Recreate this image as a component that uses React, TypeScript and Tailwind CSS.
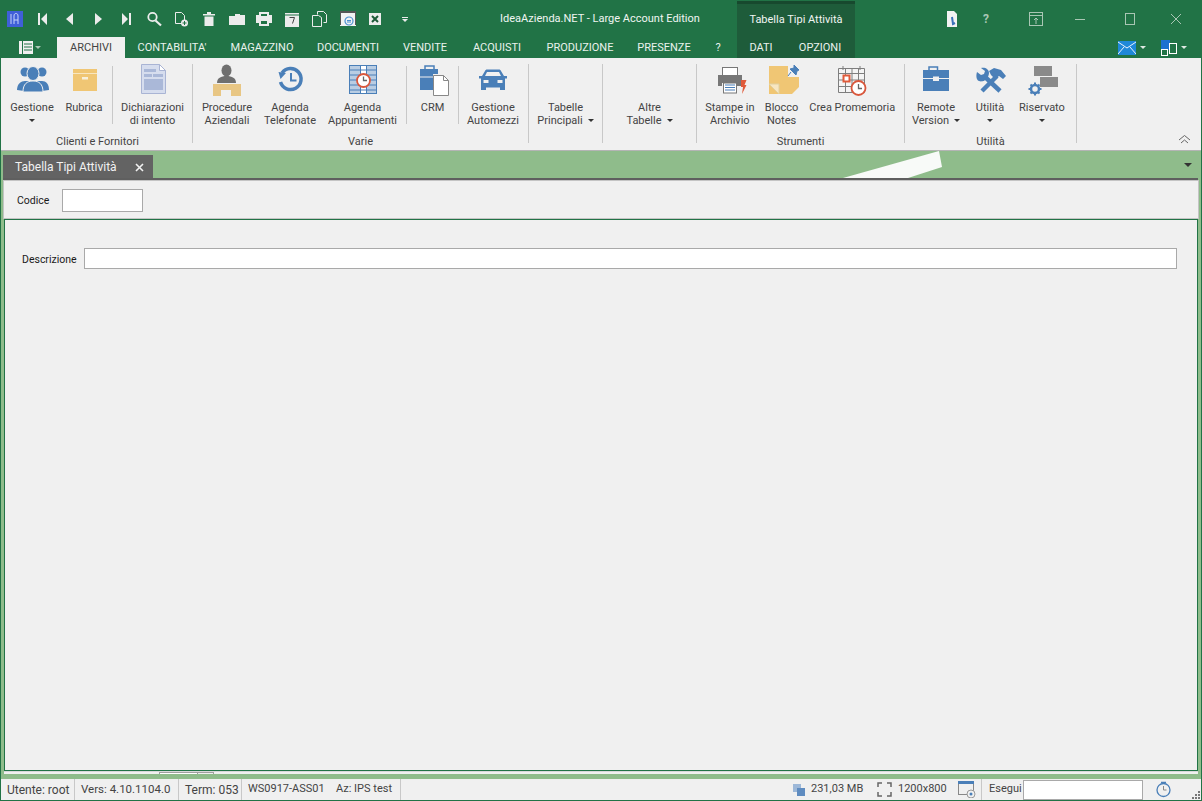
import type { ReactNode } from "react";

const blue = "#4a7fb8";
const font = { fontFamily: 'Roboto, "Noto Sans", sans-serif' };

function Caret({ className = "" }: { className?: string }) {
  return <span className={`inline-block w-0 h-0 border-x-[3px] border-t-[3px] border-x-transparent border-t-[#333] ${className}`} />;
}

function QuickBtn({ children, w = "w-[28px]" }: { children: ReactNode; w?: string }) {
  return <div className={`${w} h-[20px] flex items-center justify-center`}>{children}</div>;
}

function QuickBar() {
  const c = "#ececec";
  return (
    <div className="flex items-center w-[420px]">
      <QuickBtn>
        <svg width="16" height="16" viewBox="0 0 16 16"><rect width="16" height="16" fill="#3f5fd8" /><path d="M4 3v10M7 13V5c0-2 1-2.500 2-2.500s2 .5 2 2.500v8M7 9h4" stroke="#c8d4f8" strokeWidth="1" fill="none" /></svg>
      </QuickBtn>
      <QuickBtn><svg width="12" height="14" viewBox="0 0 12 14"><path d="M1 1h2v12H1zM4 7l6-6v12z" fill={c} /></svg></QuickBtn>
      <QuickBtn><svg width="12" height="14" viewBox="0 0 12 14"><path d="M2 7l7-6v12z" fill={c} /></svg></QuickBtn>
      <QuickBtn><svg width="12" height="14" viewBox="0 0 12 14"><path d="M10 7L3 1v12z" fill={c} /></svg></QuickBtn>
      <QuickBtn><svg width="12" height="14" viewBox="0 0 12 14"><path d="M9 1h2v12H9zM8 7L2 1v12z" fill={c} /></svg></QuickBtn>
      <QuickBtn><svg width="16" height="16" viewBox="0 0 16 16" fill="none" stroke={c}><circle cx="6.500" cy="6" r="4.200" strokeWidth="1.800" /><path d="M9.500 9.500l5.500 5" strokeWidth="2.200" /></svg></QuickBtn>
      <QuickBtn><svg width="16" height="16" viewBox="0 0 16 16" fill="none" stroke={c}><path d="M2.500 1.500h6l3 3v8h-9z" /><circle cx="11.500" cy="12" r="3.500" fill={c} stroke="none" /><path d="M9.500 12h4M11.500 10v4" stroke="#217346" /></svg></QuickBtn>
      <QuickBtn><svg width="14" height="14" viewBox="0 0 14 14" fill={c}><path d="M1 2h12v1.500H1zM5 0h4v2H5zM2.500 4.500h9V14h-9z" /></svg></QuickBtn>
      <QuickBtn><svg width="16" height="12" viewBox="0 0 16 12" fill={c}><path d="M0 3h6V1h5v1h5v10H0z" /></svg></QuickBtn>
      <QuickBtn><svg width="16" height="14" viewBox="0 0 16 14"><path d="M3 0h10v3h3v8h-3v3H3v-3H0V3h3z" fill={c} /><path d="M5 2h6v2H5zM5 9h6v3H5z" fill="#217346" /></svg></QuickBtn>
      <QuickBtn><svg width="14" height="15" viewBox="0 0 14 15"><rect y="1" width="14" height="14" fill={c} /><path d="M0 3h14" stroke="#217346" /><path d="M4.500 5.500h5l-2 6" stroke="#444" fill="none" /></svg></QuickBtn>
      <QuickBtn><svg width="15" height="16" viewBox="0 0 15 16" fill="none" stroke={c}><path d="M5.500 3.500V.5h6l3 3v8h-3" /><path d="M.5 4.500h6l3 2v9h-9z" /></svg></QuickBtn>
      <QuickBtn><svg width="16" height="16" viewBox="0 0 16 16"><rect width="16" height="15" fill="#f2f2f2" /><path d="M0 0h16v2H0zM0 2h1v12H0zM15 2h1v12h-1z" fill="#555" /><circle cx="9" cy="10" r="4" fill="none" stroke="#4a8fd0" strokeWidth="1.200" /><path d="M7 9.500h4M7 11h4" stroke="#4a8fd0" /></svg></QuickBtn>
      <QuickBtn><svg width="12" height="12" viewBox="0 0 12 12"><rect width="12" height="12" fill={c} /><path d="M3 3l6 6M9 3l-6 6" stroke="#1c5a37" strokeWidth="2" /></svg></QuickBtn>
      <QuickBtn w="w-[32px]"><div className="flex flex-col items-center gap-[1px]"><span className="w-[6px] h-px bg-[#ececec]" /><Caret className="border-t-[#ececec]" /></div></QuickBtn>
    </div>
  );
}

function TitleBar() {
  return (
    <div className="flex h-[36px] items-center">
      <QuickBar />
      <div className="w-[316px] text-center text-[11px] text-[#f0f5f2] pl-[42px] whitespace-nowrap">IdeaAzienda.NET - Large Account Edition</div>
      <div className="w-[118px] h-full bg-[#1e5c3a] border-t-[3px] border-[#17492e] flex items-center justify-center text-[11px] text-[#f0f5f2] pb-[1px]">Tabella Tipi Attività</div>
      <div className="flex-1 flex items-center pl-[90px]">
        <svg width="14" height="16" viewBox="0 0 14 16"><path d="M2 0h7l3 3v13H2z" fill="#f2f2f2" /><path d="M7 6l1 7 2-1" stroke="#3a70b8" strokeWidth="2" fill="none" /></svg>
        <span className="ml-[24px] w-[8px] text-[12px] text-[#a9c6b4] font-bold">?</span>
        <svg className="ml-[38px]" width="14" height="14" viewBox="0 0 14 14" fill="none" stroke="#a9c6b4"><rect x="0.500" y="0.500" width="13" height="13" /><path d="M1 3.500h12M7 12V6M5 8l2-2 2 2" /></svg>
        <svg className="ml-[31px]" width="12" height="12" viewBox="0 0 12 12" stroke="#a9c6b4"><path d="M1 6.500h10" /></svg>
        <svg className="ml-[38px]" width="12" height="12" viewBox="0 0 12 12" fill="none" stroke="#a9c6b4"><rect x="1.500" y="0.500" width="9" height="11" /></svg>
        <svg className="ml-[34px]" width="12" height="12" viewBox="0 0 12 12" stroke="#a9c6b4"><path d="M1 1l10 10M11 1L1 11" /></svg>
      </div>
    </div>
  );
}

function MenuTab({ w, label, active }: { w: string; label: string; active?: boolean }) {
  return <div className={`${w} h-full flex items-center justify-center pt-[1px] text-[11px] ${active ? "bg-[#f0f0f0] text-[#444]" : "text-[#eaf2ed]"}`}>{label}</div>;
}

function MenuRow() {
  return (
    <div className="flex h-[21px]">
      <div className="w-[56px] flex items-center pl-[18px] gap-[2px]">
        <svg width="14" height="13" viewBox="0 0 14 13" fill="#f0f0f0"><rect x="0" y="0" width="3" height="13" /><rect x="4" y="0" width="10" height="13" /><path d="M5 3h8M5 6h8M5 9h8" stroke="#217346" /></svg>
        <Caret className="border-t-[#a9c6b4]" />
      </div>
      <MenuTab w="w-[68px]" label="ARCHIVI" active />
      <MenuTab w="w-[94px]" label="CONTABILITA'" />
      <MenuTab w="w-[86px]" label="MAGAZZINO" />
      <MenuTab w="w-[86px]" label="DOCUMENTI" />
      <MenuTab w="w-[68px]" label="VENDITE" />
      <MenuTab w="w-[76px]" label="ACQUISTI" />
      <MenuTab w="w-[90px]" label="PRODUZIONE" />
      <MenuTab w="w-[78px]" label="PRESENZE" />
      <MenuTab w="w-[30px]" label="?" />
      <div className="w-[4px]" />
      <div className="w-[118px] flex bg-[#1e5c3a]">
        <MenuTab w="w-[48px]" label="DATI" />
        <MenuTab w="w-[70px]" label="OPZIONI" />
      </div>
      <div className="flex-1 flex items-center pl-[263px]">
        <svg width="18" height="14" viewBox="0 0 18 14"><rect width="18" height="14" fill="#1e88d8" /><path d="M0 1l9 6 9-6M0 13l6-7M18 13l-6-7" stroke="#eaf4fc" fill="none" /></svg>
        <Caret className="ml-[4px] border-t-[#dfe9e3]" />
        <svg className="ml-[15px]" width="16" height="16" viewBox="0 0 16 16"><rect x="0" y="0" width="9" height="10" fill="#1e70d0" /><rect x="0.500" y="9.500" width="6" height="6" fill="none" stroke="#fff" /><rect x="8.500" y="3.500" width="7" height="10" fill="#217346" stroke="#fff" /></svg>
        <Caret className="ml-[4px] border-t-[#dfe9e3]" />
      </div>
    </div>
  );
}

function RibbonItem({ w, icon, lines, caret }: { w: string; icon?: ReactNode; lines: string[]; caret?: "below" | "inline" }) {
  return (
    <div className={`${w} flex flex-col items-center text-[11px] leading-[13px] text-[#444]`}>
      <div className="h-[37px] w-[36px]">{icon}</div>
      {lines.map((l, i) => (
        <div key={l} className="whitespace-nowrap h-[13px]">
          {l}
          {caret === "inline" && i === lines.length - 1 && <Caret className="ml-[5px] mb-[2px]" />}
        </div>
      ))}
      {caret === "below" && <div className="h-[13px] flex items-center"><Caret /></div>}
    </div>
  );
}

function Group({ w, label, children }: { w: string; label?: string; children: ReactNode }) {
  return (
    <div className={`${w} h-[79px] border-r border-[#c8c8c8] flex flex-col shrink-0`}>
      <div className="h-[71px] flex shrink-0">{children}</div>
      <div className="h-[14px] shrink-0 text-center text-[11px] leading-[14px] text-[#444]">{label}</div>
    </div>
  );
}

function ShortSep() {
  return <div className="w-px h-[58px] mt-[2px] bg-[#c8c8c8] shrink-0" />;
}

function RibbonLines({ first, second }: { first: string; second: string }) {
  return (
    <div className="flex flex-col items-center text-[11px] leading-[13px] text-[#444]">
      <div className="h-[13px]">{first}</div>
      <div className="h-[13px]">{second}<Caret className="ml-[5px] mb-[2px]" /></div>
    </div>
  );
}

function Ribbon() {
  return (
    <div className="h-[93px] bg-[#f0f0f0] border-b border-[#b4b4b4] flex pt-[6px] pl-[2px]">
      <Group w="w-[190px]" label="Clienti e Fornitori">
        <RibbonItem w="w-[58px]" caret="below" lines={["Gestione"]} icon={
          <svg width="36" height="36" viewBox="14 64 36 36" fill={blue}>
            <circle cx="25" cy="72" r="4.500" /><circle cx="42" cy="72" r="4.500" />
            <path d="M17 90c0-6 4-9 8-9h17c4 0 7 3 7 9l-7 1H24z" />
            <ellipse cx="33" cy="73.500" rx="6" ry="7" stroke="#f0f0f0" />
            <path d="M23 92c0-8 4-11 10-11s10 3 10 11z" stroke="#f0f0f0" />
          </svg>} />
        <RibbonItem w="w-[46px]" lines={["Rubrica"]} icon={
          <svg width="36" height="36" viewBox="66 64 36 36">
            <path d="M73 69h24v22H73z" fill="#f0c674" /><path d="M73 73.500h24" stroke="#f8e6c0" /><rect x="82" y="77" width="6" height="2.500" fill="#f8f0dc" />
          </svg>} />
        <div className="w-[5px]" />
        <ShortSep />
        <RibbonItem w="w-[79px]" lines={["Dichiarazioni", "di intento"]} icon={
          <svg width="36" height="36" viewBox="134 64 36 36">
            <path d="M140.500 64.500h18l6 6v23h-24z" fill="#d6ddee" stroke="#a9b4d4" />
            <path d="M158.500 64.500v6h6z" fill="#fff" stroke="#a9b4d4" />
            <path d="M143 69h12v3h-12zM143 74h8v3h-8zM152 74h10v3h-10zM143 79h19v11h-19z" fill="#aab8d8" />
          </svg>} />
      </Group>
      <Group w="w-[336px]" label="Varie">
        <RibbonItem w="w-[68px]" lines={["Procedure", "Aziendali"]} icon={
          <svg width="36" height="36" viewBox="209 64 36 36">
            <ellipse cx="226.500" cy="70.500" rx="5" ry="6" fill="#6f6f6f" /><path d="M217 83c0-5 4-7 9.500-7s9.500 2 9.500 7z" fill="#6f6f6f" />
            <path d="M213 84h28v12h-10v-6h-10v6h-8z" fill="#e8c684" />
          </svg>} />
        <RibbonItem w="w-[58px]" lines={["Agenda", "Telefonate"]} icon={
          <svg width="36" height="36" viewBox="272 64 36 36" fill="none" stroke={blue}>
            <path d="M282 73a10.500 10.500 0 1 1-1.500 9" strokeWidth="3.500" />
            <path d="M278.500 72l7.500 1-5.500 6z" fill={blue} stroke="none" />
            <path d="M291 73v7.500h5.500" strokeWidth="2" />
          </svg>} />
        <RibbonItem w="w-[87px]" lines={["Agenda", "Appuntamenti"]} icon={
          <svg width="36" height="36" viewBox="345 64 36 36">
            <rect x="349.500" y="65.500" width="27" height="28" fill="#fff" stroke={blue} />
            <path d="M350 66h10v27h-10zM367 66h9v27h-9z" fill="#b9cde3" />
            <path d="M350 70h26M350 75h26M350 80h26M350 85h26M350 90h26M360.500 66v27M366.500 66v27" stroke={blue} />
            <circle cx="363.500" cy="80.500" r="6.500" fill="#fff" stroke="#d9573c" strokeWidth="1.800" />
            <path d="M363.500 76.500v4h3.500" stroke="#666" strokeWidth="1.300" fill="none" />
          </svg>} />
        <ShortSep />
        <RibbonItem w="w-[51px]" lines={["CRM"]} icon={
          <svg width="36" height="36" viewBox="414 64 36 36">
            <path d="M424 69v-3h9v3" stroke={blue} strokeWidth="1.500" fill="none" />
            <path d="M419 69h18v5h-5v16h-13z" fill={blue} /><path d="M419 77h13" stroke="#f0f0f0" />
            <path d="M432.500 75.500h10l5 5v15h-15z" fill="#fff" stroke="#888" />
            <path d="M442.500 75.500v5h5" fill="none" stroke="#888" />
          </svg>} />
        <ShortSep />
        <RibbonItem w="w-[68px]" lines={["Gestione", "Automezzi"]} icon={
          <svg width="36" height="36" viewBox="475 64 36 36">
            <path d="M482 76l3-5c.5-1 1-1.500 2-1.500h12c1 0 1.500.5 2 1.500l3 5h3v2.500h-2V90h-5v-2.500h-14V90h-5V78.500h-2V76z" fill={blue} />
            <path d="M485 76l2-4h12l2 4z" fill="#f0f0f0" /><rect x="483.500" y="80" width="5" height="3" fill="#f0f0f0" /><rect x="497.500" y="80" width="5" height="3" fill="#f0f0f0" />
          </svg>} />
      </Group>
      <Group w="w-[74px]">
        <div className="w-full pt-[37px]">
          <RibbonLines first="Tabelle" second="Principali" />
        </div>
      </Group>
      <Group w="w-[94px]">
        <div className="w-full pt-[37px]">
          <RibbonLines first="Altre" second="Tabelle" />
        </div>
      </Group>
      <Group w="w-[208px]" label="Strumenti">
        <RibbonItem w="w-[66px]" lines={["Stampe in", "Archivio"]} icon={
          <svg width="36" height="36" viewBox="712 64 36 36">
            <rect x="722.500" y="67.500" width="15" height="8" fill="#fff" stroke="#777" />
            <path d="M718 75h24v11h-5v-3h-15v3h-4z" fill="#777" />
            <rect x="723.500" y="83" width="13" height="10" fill="#fff" stroke="#777" /><path d="M725 85h10M725 87.500h10M725 90h10" stroke={blue} strokeWidth="1.200" />
            <path d="M741 80h5.500l-2 5h2l-4.500 9 1-7h-2z" fill="#e05a3a" />
          </svg>} />
        <RibbonItem w="w-[38px]" lines={["Blocco", "Notes"]} icon={
          <svg width="36" height="36" viewBox="764 64 36 36">
            <path d="M769 66h19l11 1v20l-7 7h-23z" fill="#f0c674" /><path d="M769 84l10 10v-10z" fill="#f8e6c0" stroke="#e0d0a0" />
            <path d="M788 66h11v11h-11z" fill="#f0f0f0" />
            <path d="M794 65l5 5-2 1-1 4-6-6 4-1zM791 72l-3 4" fill={blue} stroke={blue} />
          </svg>} />
        <RibbonItem w="w-[104px]" lines={["Crea Promemoria"]} icon={
          <svg width="36" height="36" viewBox="836 64 36 36">
            <path d="M840.500 68.500h26v24h-26zM840 73.500h27M847.500 69v24M854 69v24M860.500 69v24M840 80h27M840 86.500h27M845 66v4M862 66v4" fill="#f4f4f4" stroke="#7e7e7e" />
            <rect x="845.500" y="75.500" width="6" height="6" fill="#fff" stroke="#e05a3a" strokeWidth="2" />
            <circle cx="860.500" cy="88" r="7" fill="#fff" stroke="#d9573c" strokeWidth="1.800" />
            <path d="M860.500 84v4.500h3.500" stroke="#666" strokeWidth="1.300" fill="none" />
          </svg>} />
      </Group>
      <Group w="w-[172px]" label="Utilità">
        <RibbonItem w="w-[62px]" caret="inline" lines={["Remote", "Version"]} icon={
          <svg width="36" height="36" viewBox="920 64 36 36">
            <path d="M931 70v-3h8.500v3" fill="none" stroke={blue} strokeWidth="1.500" />
            <path d="M925 70h26v8h-10v-1.500h-6V78h-10zM925 79h10v2h6v-2h10v12h-26z" fill={blue} />
          </svg>} />
        <RibbonItem w="w-[46px]" caret="below" lines={["Utilità"]} icon={
          <svg width="36" height="36" viewBox="972 64 36 36" fill={blue}>
            <path d="M984 76l16 15" stroke={blue} strokeWidth="4.500" />
            <path d="M997 76L982 91" stroke={blue} strokeWidth="4.500" />
            <path d="M977 72l4 3 3-1 1-3-4-3c4-1 8 1 8 5 0 2-1 3-1 4l-4 4c-1 0-3 1-5 0-3-1-3-6-2-9z" />
            <path d="M989 71l5-3 7 2 5 6-3 3-4-3-4 3-4-4z" />
          </svg>} />
        <RibbonItem w="w-[58px]" caret="below" lines={["Riservato"]} icon={
          <svg width="36" height="36" viewBox="1024 64 36 36">
            <rect x="1034" y="66" width="18" height="10" fill="#8a8a8a" /><rect x="1040" y="77" width="18" height="10" fill="#8a8a8a" />
            <circle cx="1035" cy="89" r="4" fill="none" stroke={blue} strokeWidth="2.500" />
            <path d="M1035 82.500v3M1035 92.500v3M1028.500 89h3M1038.500 89h3M1030.500 84.500l2 2M1037.500 91.500l2 2M1039.500 84.500l-2 2M1032.500 91.500l-2 2" stroke={blue} strokeWidth="2" />
          </svg>} />
      </Group>
      <div className="ml-auto mr-[10px] mt-[71px]">
        <svg width="13" height="9" viewBox="0 0 13 9" fill="none" stroke="#666"><path d="M1 5l5.500-4.500L12 5M3 8l3.500-3L10 8" /></svg>
      </div>
    </div>
  );
}

function DocTabs() {
  return (
    <div className="relative h-[27px] flex pl-[2px] pt-[4px] bg-[#8fbc8b]">
      <div className="w-[150px] h-[23px] bg-[#636363] text-[#f2f2f2] text-[12px] flex items-center justify-between pl-[12px] pr-[9px] pt-[1px]">
        <span>Tabella Tipi Attività</span>
        <svg width="9" height="9" viewBox="0 0 9 9" stroke="#f2f2f2" strokeWidth="1.600"><path d="M1 1l7 7M8 1l-7 7" /></svg>
      </div>
      <svg className="absolute left-[840px] top-0" width="104" height="27" viewBox="840 151 104 27"><path d="M842 178l96-27 3 16-34 11z" fill="#f8faf8" /></svg>
      <div className="ml-auto mr-[9px] mt-[8px] flex"><Caret className="border-x-[4px] border-t-[4px]" /></div>
    </div>
  );
}

function Field({ label, className, labelClass }: { label: string; className: string; labelClass: string }) {
  return (
    <div className="flex items-center text-[10.5px] text-[#1a1a1a]">
      <span className={labelClass}>{label}</span>
      <div className={`bg-white border border-[#a9a9a9] ${className}`} />
    </div>
  );
}

function FormArea() {
  return (
    <div className="flex-1 flex flex-col pl-[2px] pr-[2px]">
      <div className="h-[2px] bg-[#5f5f5f] mr-[1px]" />
      <div className="h-[39px] bg-[#f0f0f0] border border-[#c4c4c4] flex items-center pl-[13px] pt-[1px]">
        <Field label="Codice" labelClass="w-[45px] pt-[1px]" className="w-[81px] h-[23px]" />
      </div>
      <div className="flex-1 mx-[1px] bg-[#f0f0f0] border border-[#217346] pl-[17px] pr-[20px] pt-[28px]">
        <Field label="Descrizione" labelClass="w-[62px] pt-[3px]" className="flex-1 h-[21px]" />
      </div>
    </div>
  );
}

function BottomStrip() {
  return (
    <div className="h-[8px] bg-[#8fbc8b] flex flex-col">
      <div className="h-[3px] bg-[#f0f0f0] mx-[3px] border-t border-[#d8d8d8] flex pl-[155px]">
        <span className="w-[39px] border-x border-t border-[#a0a0a0] bg-white" />
        <span className="w-[16px] border-r border-t border-[#a0a0a0]" />
      </div>
    </div>
  );
}

function StatusCell({ w, children, size = "text-[11px]" }: { w: string; children: ReactNode; size?: string }) {
  return <div className={`${w} ${size} h-full flex items-center pl-[6px] whitespace-nowrap border-r border-[#c8c8c8]`}>{children}</div>;
}

function StatusBar() {
  return (
    <div className="h-[21px] bg-[#f0f0f0] flex items-center text-[11px] text-[#444] whitespace-nowrap">
      <StatusCell w="w-[74px]" size="text-[12px]">Utente: root</StatusCell>
      <StatusCell w="w-[104px]" size="text-[11.5px]">Vers: 4.10.1104.0</StatusCell>
      <StatusCell w="w-[63px]" size="text-[12px]">Term: 053</StatusCell>
      <StatusCell w="w-[159px]"><span className="w-[88px]">WS0917-ASS01</span><span>Az: IPS test</span></StatusCell>
      <div className="w-[392px]" />
      <svg width="12" height="12" viewBox="0 0 12 12"><rect width="8" height="8" fill="#9db8d8" /><rect x="4" y="4" width="8" height="8" fill="#5f8cc0" /></svg>
      <span className="ml-[6px] w-[50px]">231,03 MB</span>
      <svg className="ml-[16px]" width="15" height="15" viewBox="0 0 15 15" fill="none" stroke="#666" strokeWidth="1.500"><path d="M1 5V1h4M10 1h4v4M14 10v4h-4M5 14H1v-4" /></svg>
      <span className="ml-[6px] w-[48px]">1200x800</span>
      <svg className="ml-[12px]" width="18" height="17" viewBox="0 0 18 17" fill="none"><rect x="0.500" y="0.500" width="15" height="13" stroke="#888" /><rect width="16" height="3" fill={blue} /><circle cx="13" cy="13" r="4" fill="#f0f0f0" stroke="#999" /><circle cx="13" cy="13" r="1.500" fill={blue} /></svg>
      <div className="ml-[5px] h-full w-px bg-[#c8c8c8]" />
      <span className="ml-[7px] w-[34px]">Esegui</span>
      <div className="w-[120px] h-[20px] bg-white border border-[#a9a9a9]" />
      <svg className="ml-[13px]" width="15" height="17" viewBox="0 0 15 17" fill="none" stroke={blue}><circle cx="7.500" cy="9" r="6.500" strokeWidth="1.300" /><path d="M5 1.500h5" strokeWidth="1.500" /><path d="M7.500 5v4h3" stroke="#888" /></svg>
      <div className="ml-auto mr-[1px] self-end mb-[1px] flex">
        <svg width="9" height="9" viewBox="0 0 9 9" fill="#777"><rect x="7" y="1" width="2" height="2" /><rect x="4" y="4" width="2" height="2" /><rect x="7" y="4" width="2" height="2" /><rect x="1" y="7" width="2" height="2" /><rect x="4" y="7" width="2" height="2" /><rect x="7" y="7" width="2" height="2" /></svg>
      </div>
    </div>
  );
}

export default function App() {
  return (
    <div className="w-[1202px] h-[801px] flex flex-col overflow-hidden border border-[#217346] bg-[#8fbc8b]" style={font}>
      <div className="bg-[#217346]">
        <TitleBar />
        <MenuRow />
      </div>
      <Ribbon />
      <DocTabs />
      <FormArea />
      <BottomStrip />
      <StatusBar />
    </div>
  );
}
